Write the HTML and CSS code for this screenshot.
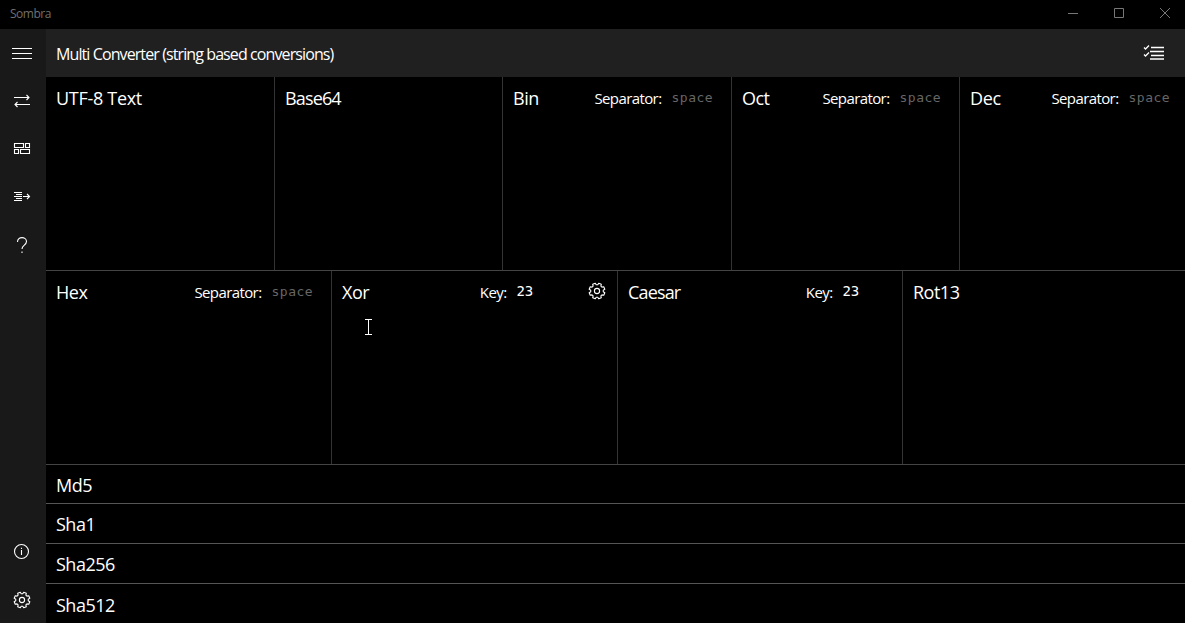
FILE: index.html
```html
<!DOCTYPE html>
<html lang="en">
<head>
<meta charset="utf-8">
<title>Sombra</title>
<link rel="stylesheet" href="styles.css">
</head>
<body>
<svg width="0" height="0" class="defs">
  <symbol id="gear" viewBox="0 0 18 18">
    <path stroke-linejoin="round" d="M15.250 9.770L16.810 10.730 15.750 13.300 13.960 12.880 12.880 13.960 13.300 15.750 10.730 16.810 9.770 15.250H8.230L7.270 16.810 4.700 15.750 5.120 13.960 4.040 12.880 2.250 13.300 1.190 10.730 2.750 9.770V8.230L1.190 7.270 2.250 4.700 4.040 5.120 5.120 4.040 4.700 2.250 7.270 1.190 8.230 2.750H9.770L10.730 1.190 13.300 2.250 12.880 4.040 13.960 5.120 15.750 4.700 16.810 7.270 15.250 8.230z"/>
    <circle cx="9" cy="9" r="2.600"/>
  </symbol>
</svg>
<div class="window">
  <header class="titlebar">
    <span class="app-name">Sombra</span>
    <div class="controls">
      <svg width="12" height="12"><path d="M1 6.500h10"/></svg>
      <svg width="12" height="12"><path d="M1.500 1.500h9v9h-9z"/></svg>
      <svg width="12" height="12"><path d="M1 1l10 10M11 1L1 11"/></svg>
    </div>
  </header>
  <div class="body">
    <nav class="sidebar">
      <div class="item"><svg width="22" height="18"><path d="M1 4.500h20M1 9.500h20M1 14.500h20"/></svg></div>
      <div class="item"><svg width="18" height="18"><path d="M1 5.500h15M13.500 3l2.500 2.500L13.500 8M17 12.500H2M4.500 10L2 12.500 4.500 15"/></svg></div>
      <div class="item"><svg width="18" height="18"><path d="M1.500 3.500h9v4h-9zM12.500 3.500h4v4h-4zM1.500 9.500h4v4h-4zM7.500 9.500h9v4h-9z"/></svg></div>
      <div class="item"><svg width="18" height="18"><path d="M1 4.500h8M3 6.500h6M1 8.500h8M3 10.500h6M1 12.500h8M10 8.500h6.500M14 6l2.500 2.500L14 11"/></svg></div>
      <div class="item"><svg width="18" height="18"><path d="M4.500 6C4.500 0 13.500 .5 13.500 5.500c0 3.500-4.500 3.800-4.500 7.500M9 15.500V17"/></svg></div>
      <div class="item bottom"><svg width="18" height="18"><circle cx="8.500" cy="9.500" r="7"/><path d="M8.500 8v5M8.500 5.800v1.300"/></svg></div>
      <div class="item last"><svg width="18" height="18"><use href="#gear"/></svg></div>
    </nav>
    <main class="content">
      <div class="toolbar">
        <h1>Multi Converter (string based conversions)</h1>
        <svg width="22" height="18"><path d="M1 4.500l1.500 1.500L6 2.500M1 11.500l1.500 1.500L6 9.500"/><path class="rows" d="M8 4.500h13M7 8.500h14M8 12.500h13M7 16h14"/></svg>
      </div>
      <div class="row row-five">
        <section class="panel"><h2 class="wide">UTF-8 Text</h2></section>
        <section class="panel"><h2 class="tight">Base64</h2></section>
        <section class="panel"><h2>Bin</h2><label>Separator:</label><span class="field hint">space</span></section>
        <section class="panel"><h2>Oct</h2><label>Separator:</label><span class="field hint">space</span></section>
        <section class="panel"><h2 class="wide">Dec</h2><label>Separator:</label><span class="field hint">space</span></section>
      </div>
      <div class="row row-four">
        <section class="panel"><h2>Hex</h2><label>Separator:</label><span class="field hint">space</span></section>
        <section class="panel"><h2>Xor</h2><label>Key:</label><span class="field key">23</span><svg class="settings" width="18" height="18"><use href="#gear"/></svg></section>
        <section class="panel"><h2 class="tight">Caesar</h2><label>Key:</label><span class="field">23</span></section>
        <section class="panel"><h2>Rot13</h2></section>
      </div>
      <div class="hashes">
        <section><h2>Md5</h2></section>
        <section><h2>Sha1</h2></section>
        <section><h2>Sha256</h2></section>
        <section><h2>Sha512</h2></section>
      </div>
    </main>
  </div>
  <svg class="cursor" width="9" height="18"><path d="M1 1.500h7M1 16.500h7M4.500 2v14"/></svg>
</div>
</body>
</html>
```
FILE: styles.css
```css
* { box-sizing: border-box; }
body { margin: 0; background: #000; color: #fff; font-family: "Open Sans", "Noto Sans", sans-serif; }
h1, h2 { margin: 0; font-weight: 400; white-space: nowrap; }
svg { display: block; fill: none; stroke: #fff; stroke-width: 1.1; flex: none; }
.defs { position: absolute; }
.window { position: relative; width: 1185px; height: 623px; overflow: hidden; display: flex; flex-direction: column; }
.titlebar { height: 29px; display: flex; justify-content: space-between; padding: 0 14px 0 10px; }
.app-name { font-size: 12px; line-height: 27px; color: #707070; letter-spacing: -.5px; }
.controls { display: flex; gap: 34px; padding-top: 7px; }
.controls svg { stroke: #777; stroke-width: 1; }
.body { flex: 1; display: flex; min-height: 0; }
.sidebar { width: 46px; background: #191919; display: flex; flex-direction: column; }
.item { height: 48px; display: flex; align-items: center; justify-content: center; padding-right: 2px; }
.item.bottom { margin-top: auto; }
.item.last { padding-top: 2px; }
.content { flex: 1; min-width: 0; display: flex; flex-direction: column; }
.toolbar { height: 48px; background: #202020; display: flex; justify-content: space-between; padding: 0 20px 0 10px; }
.toolbar h1 { font-size: 16px; line-height: 51px; letter-spacing: -.9px; }
.toolbar svg { margin-top: 14px; stroke-width: 1.3; }
.toolbar .rows { stroke-width: 1.5; }
.row { height: 194px; display: grid; border-bottom: 1px solid #444; overflow: hidden; }
.row-five { grid-template-columns: 229px 228px 229px 228px 229px; }
.row-four { grid-template-columns: 286px 286px 285px 286px; }
.panel { display: flex; align-items: flex-start; padding-left: 10px; border-right: 1px solid #333; }
h2 { font-size: 18px; line-height: 43px; letter-spacing: -.5px; }
h2.wide { letter-spacing: -.3px; }
h2.tight { letter-spacing: -.85px; }
.panel h2 { flex: 1; }
label { font-size: 15px; line-height: 43px; letter-spacing: -.6px; margin-right: 10px; }
.field { width: 59.5px; font: 14px/40px "DejaVu Sans Mono", monospace; letter-spacing: -.1px; }
.hint { font-size: 13px; line-height: 41px; letter-spacing: .5px; color: #666; }
.key { width: 71px; }
.settings { margin: 11px 11.5px 0 0; }
.hashes { display: grid; grid-template-rows: 39px 40px 40px 39px; }
.hashes section { border-bottom: 1px solid #555; overflow: hidden; }
.hashes section:last-child { border: 0; }
.hashes h2 { padding-left: 10px; line-height: 41px; }
.hashes section:last-child h2 { line-height: 43px; }
.cursor { position: absolute; left: 364px; top: 318px; stroke-width: 1; }
```
